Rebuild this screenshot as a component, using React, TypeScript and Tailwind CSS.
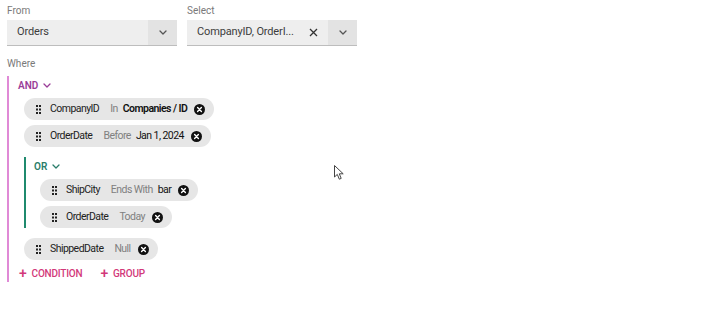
import React from "react";

const font = { fontFamily: 'Roboto, "Noto Sans", sans-serif' };

function Chevron({ className = "" }: { className?: string }) {
  return (
    <svg width="8" height="5" viewBox="0 0 8 5" className={className}>
      <path d="M1 1 L4 4 L7 1" fill="none" stroke="currentColor" strokeWidth="1.3" strokeLinecap="round" strokeLinejoin="round" />
    </svg>
  );
}

function Handle() {
  return (
    <svg width="5" height="9" viewBox="0 0 5 9" className="shrink-0">
      {[0, 3.5, 7].map((y) =>
        [0, 3].map((x) => <rect key={`${x}-${y}`} x={x} y={y} width="2" height="2" fill="#222" />)
      )}
    </svg>
  );
}

function CloseDot() {
  return (
    <svg width="11" height="11" viewBox="0 0 11 11" className="shrink-0">
      <circle cx="5.5" cy="5.5" r="5.5" fill="#111" />
      <path d="M3.6 3.6 L7.4 7.4 M7.4 3.6 L3.6 7.4" stroke="#fff" strokeWidth="1.4" strokeLinecap="round" />
    </svg>
  );
}

function Chip({ field, op, value, bold }: { field: string; op: string; value?: string; bold?: boolean }) {
  return (
    <div className="flex h-[22px] w-fit items-center rounded-full bg-[#e6e6e6] pl-[12px] pr-[9px] text-[10.5px] tracking-[-0.55px] whitespace-nowrap">
      <Handle />
      <span className="ml-[9px] text-[#222]">{field}</span>
      <span className="ml-[11px] text-[#808080]">{op}</span>
      {value && <span className={`ml-[5px] text-[#111] ${bold ? "font-semibold" : ""}`}>{value}</span>}
      <span className="ml-[7px] flex">
        <CloseDot />
      </span>
    </div>
  );
}

function SelectBox({ value, clear }: { value: string; clear?: boolean }) {
  return (
    <div className="flex h-[26px] w-[170px] border-b border-[#bdbdbd] bg-[#eeeeee]">
      <div className="flex min-w-0 flex-1 items-center whitespace-nowrap pl-[10px] text-[11px] tracking-[-0.15px] text-[#3d3d3d]">{value}</div>
      {clear && (
        <div className="flex w-[30px] shrink-0 items-center justify-center text-[#333]">
          <svg width="9" height="9" viewBox="0 0 9 9">
            <path d="M1 1 L8 8 M8 1 L1 8" stroke="currentColor" strokeWidth="1.3" />
          </svg>
        </div>
      )}
      <div className="flex w-[29px] shrink-0 items-center justify-center bg-[#e3e3e3] text-[#555]">
        <Chevron />
      </div>
    </div>
  );
}

export default function App() {
  return (
    <div className="relative h-[320px] w-[720px] bg-white px-[7px] pt-[4px]" style={font}>
      <div className="flex gap-[10px]">
        <div>
          <div className="mb-[2px] h-[14px] text-[10px] leading-[14px] text-[#7a7a7a]">From</div>
          <SelectBox value="Orders" />
        </div>
        <div>
          <div className="mb-[2px] h-[14px] text-[10px] leading-[14px] text-[#7a7a7a]">Select</div>
          <SelectBox value="CompanyID, OrderI..." clear />
        </div>
      </div>

      <div className="mt-[11px] h-[14px] text-[10px] leading-[14px] text-[#7a7a7a]">Where</div>

      <div className="mt-[5px] flex flex-col border-l-2 border-[#e08ad6] pb-[1px]">
        <div className="flex h-[18px] items-center gap-[5px] pl-[9px] text-[10px] font-semibold text-[#9a3d98]">
          AND <Chevron />
        </div>
        <div className="mt-[4px] flex flex-col gap-[5px] pl-[15px]">
          <Chip field="CompanyID" op="In" value="Companies / ID" bold />
          <Chip field="OrderDate" op="Before" value="Jan 1, 2024" />
          <div className="mt-[5px] mb-[5px] flex flex-col border-l-2 border-[#1f8a6e]">
            <div className="flex h-[18px] items-center gap-[5px] pl-[8px] text-[10px] font-semibold text-[#2a7d6a]">
              OR <Chevron />
            </div>
            <div className="mt-[4px] flex flex-col gap-[5px] pl-[14px]">
              <Chip field="ShipCity" op="Ends With" value="bar" />
              <Chip field="OrderDate" op="Today" />
            </div>
          </div>
          <Chip field="ShippedDate" op="Null" />
        </div>
        <div className="mt-[5px] flex h-[16px] items-center gap-[18px] pl-[10px] text-[10px] font-medium tracking-[-0.2px] text-[#d2387a]">
          <span className="flex items-center gap-[5px]">
            <span className="text-[14px] leading-none">+</span>CONDITION
          </span>
          <span className="flex items-center gap-[5px]">
            <span className="text-[14px] leading-none">+</span>GROUP
          </span>
        </div>
      </div>

      <svg className="absolute left-[334px] top-[165px]" width="11" height="16" viewBox="0 0 11 16">
        <path d="M0.5 0.5 L0.5 12 L3.3 9.4 L5.3 14.2 L7.2 13.4 L5.3 8.8 L9.2 8.8 Z" fill="#fff" stroke="#444" strokeWidth="1" strokeLinejoin="round" />
      </svg>
    </div>
  );
}
